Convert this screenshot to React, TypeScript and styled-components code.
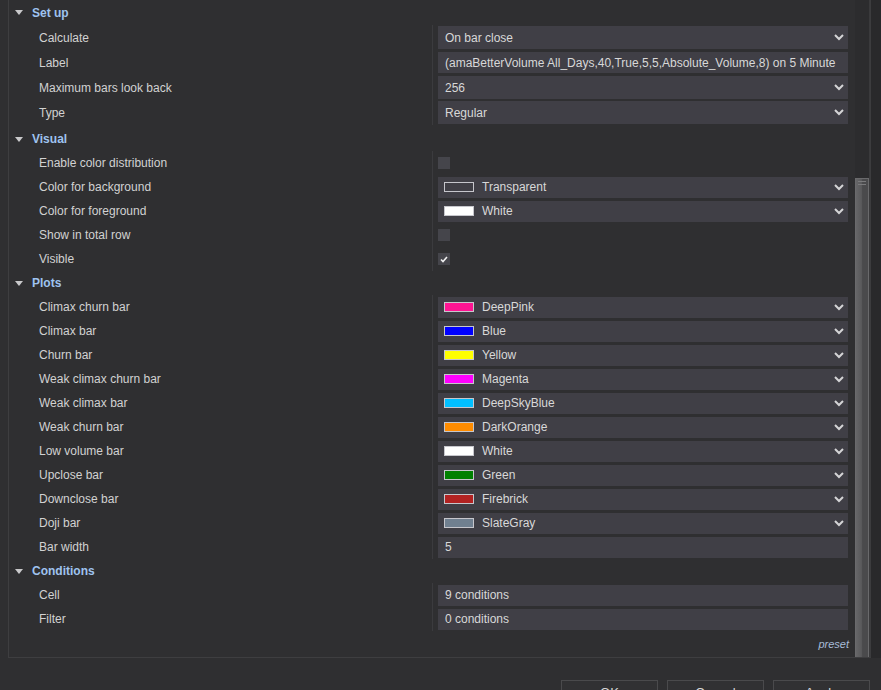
import React from "react"
import styled, { createGlobalStyle } from "styled-components"

const GlobalStyle = createGlobalStyle`
  html, body {
    margin: 0;
    padding: 0;
    background: #2f2f31;
    overflow: hidden;
  }
  body {
    width: 881px;
    height: 690px;
    font-family: "Liberation Sans", Arial, sans-serif;
    font-size: 12px;
    color: #d4d4d4;
  }
`

type Swatch = { color: string | null; name: string }

type Prop = {
  label: string
  kind: "select" | "text" | "check" | "color"
  value?: string
  checked?: boolean
  swatch?: Swatch
}

type Group = { title: string; rowH: number; extra?: number; props: Prop[] }

const groups: Group[] = [
  {
    title: "Set up",
    rowH: 25,
    extra: 2,
    props: [
      { label: "Calculate", kind: "select", value: "On bar close" },
      {
        label: "Label",
        kind: "text",
        value: "(amaBetterVolume All_Days,40,True,5,5,Absolute_Volume,8) on 5 Minute",
      },
      { label: "Maximum bars look back", kind: "select", value: "256" },
      { label: "Type", kind: "select", value: "Regular" },
    ],
  },
  {
    title: "Visual",
    rowH: 24,
    props: [
      { label: "Enable color distribution", kind: "check", checked: false },
      { label: "Color for background", kind: "color", swatch: { color: null, name: "Transparent" } },
      { label: "Color for foreground", kind: "color", swatch: { color: "#ffffff", name: "White" } },
      { label: "Show in total row", kind: "check", checked: false },
      { label: "Visible", kind: "check", checked: true },
    ],
  },
  {
    title: "Plots",
    rowH: 24,
    props: [
      { label: "Climax churn bar", kind: "color", swatch: { color: "#ff1493", name: "DeepPink" } },
      { label: "Climax bar", kind: "color", swatch: { color: "#0000ff", name: "Blue" } },
      { label: "Churn bar", kind: "color", swatch: { color: "#ffff00", name: "Yellow" } },
      { label: "Weak climax churn bar", kind: "color", swatch: { color: "#ff00ff", name: "Magenta" } },
      { label: "Weak climax bar", kind: "color", swatch: { color: "#00bfff", name: "DeepSkyBlue" } },
      { label: "Weak churn bar", kind: "color", swatch: { color: "#ff8c00", name: "DarkOrange" } },
      { label: "Low volume bar", kind: "color", swatch: { color: "#ffffff", name: "White" } },
      { label: "Upclose bar", kind: "color", swatch: { color: "#008000", name: "Green" } },
      { label: "Downclose bar", kind: "color", swatch: { color: "#b22222", name: "Firebrick" } },
      { label: "Doji bar", kind: "color", swatch: { color: "#708090", name: "SlateGray" } },
      { label: "Bar width", kind: "text", value: "5" },
    ],
  },
  {
    title: "Conditions",
    rowH: 24,
    props: [
      { label: "Cell", kind: "text", value: "9 conditions" },
      { label: "Filter", kind: "text", value: "0 conditions" },
    ],
  },
]

const Window = styled.div`
  display: flex;
  flex-direction: column;
  height: 690px;
`

const PanelRow = styled.div`
  display: flex;
  flex: none;
  height: 658px;
`

const Panel = styled.div`
  margin-left: 8px;
  width: 861px;
  display: flex;
  border-left: 1px solid #3e3e40;
  border-right: 1px solid #3c3c3e;
  border-bottom: 1px solid #3e3e40;
`

const Gutter = styled.div`
  flex: 1;
  background: #29292b;
`

const Content = styled.div`
  width: 846px;
  display: flex;
  flex-direction: column;
`

const Section = styled.div<{ $extra: number }>`
  display: flex;
  flex-direction: column;
  padding-bottom: ${(p) => p.$extra}px;
`

const Header = styled.div<{ $h: number }>`
  height: ${(p) => p.$h}px;
  display: flex;
  align-items: center;
  padding-left: 6px;
  gap: 9px;
  font-weight: bold;
  color: #9fc3ef;
`

const Caret = styled.span`
  width: 0;
  height: 0;
  border-left: 4.5px solid transparent;
  border-right: 4.5px solid transparent;
  border-top: 5px solid #c9c9cb;
`

const Row = styled.div<{ $h: number }>`
  height: ${(p) => p.$h}px;
  display: flex;
`

const Name = styled.div`
  width: 423px;
  padding-left: 30px;
  box-sizing: border-box;
  display: flex;
  align-items: center;
  color: #d2d2d2;
`

const Cell = styled.div`
  flex: 1;
  border-left: 1px solid #3b3b3e;
  padding: 0 7px 0 5px;
  display: flex;
  align-items: center;
`

const Field = styled.div<{ $h: number }>`
  flex: 1;
  height: ${(p) => p.$h}px;
  background: #403f46;
  display: flex;
  align-items: center;
  padding: 0 4px 0 7px;
  color: #d8d8d8;
  white-space: nowrap;
  overflow: hidden;
`

const FieldText = styled.span`
  flex: 1;
`

const ColorField = styled(Field)`
  padding-left: 6px;
  gap: 8px;
`

const Chip = styled.span<{ $color: string | null }>`
  width: 28px;
  height: 8px;
  border: 1px solid #c6c6cc;
  background: ${(p) => p.$color ?? "transparent"};
  flex: none;
`

const Check = styled.span`
  width: 12px;
  height: 12px;
  background: #45454b;
  display: flex;
  align-items: center;
  justify-content: center;
`

const Footer = styled.div`
  flex: 1;
  display: flex;
  justify-content: flex-end;
  align-items: center;
  padding: 0 6px 0 0;
  font-size: 11px;
  font-style: italic;
  color: #a7bcd8;
`

const Scroll = styled.div`
  width: 14px;
  display: flex;
  flex-direction: column;
  background: #2c2c2e;
  border-right: 1px solid #3a3a3c;
`

const Thumb = styled.div<{ $offset: number }>`
  margin-top: ${(p) => p.$offset}px;
  flex: 1;
  border: 1px solid #6a6a6c;
  border-bottom: none;
  background: linear-gradient(90deg, #666668 0%, #5a5a5c 45%, #4a4a4c 55%, #4a4a4c 100%);
  display: flex;
  flex-direction: column;
  align-items: center;
  padding-top: 2px;
  gap: 2px;
`

const Grip = styled.span`
  width: 8px;
  height: 1px;
  background: #7a7a7c;
`

const Buttons = styled.div`
  display: flex;
  flex: none;
  justify-content: flex-end;
  gap: 9px;
  padding: 22px 11px 0 0;
`

const Button = styled.div`
  width: 95px;
  height: 22px;
  flex: none;
  border: 1px solid #4a4a4c;
  background: #313133;
  color: #d8d8d8;
  font-size: 13px;
  display: flex;
  align-items: center;
  justify-content: center;
`

const Chevron = () => (
  <svg width="10" height="7" viewBox="0 0 10 7">
    <polyline points="1,1 5,5 9,1" fill="none" stroke="#d4d4d6" strokeWidth="2" />
  </svg>
)

const Tick = () => (
  <svg width="8" height="7" viewBox="0 0 8 7">
    <polyline points="1,3.5 3,5.5 7,1" fill="none" stroke="#f0f0f0" strokeWidth="1.6" />
  </svg>
)

const Value = ({ prop, h }: { prop: Prop; h: number }) => {
  const fh = h === 25 ? 23 : 21
  if (prop.kind === "check") {
    return <Check>{prop.checked && <Tick />}</Check>
  }
  if (prop.kind === "color" && prop.swatch) {
    return (
      <ColorField $h={fh}>
        <Chip $color={prop.swatch.color} />
        <FieldText>{prop.swatch.name}</FieldText>
        <Chevron />
      </ColorField>
    )
  }
  return (
    <Field $h={prop.kind === "text" && h === 25 ? 21 : fh}>
      <FieldText>{prop.value}</FieldText>
      {prop.kind === "select" && <Chevron />}
    </Field>
  )
}

export default function App() {
  return (
    <>
      <GlobalStyle />
      <Window>
        <PanelRow>
          <Panel>
            <Content>
              {groups.map((g) => (
                <Section key={g.title} $extra={g.extra ?? 0}>
                  <Header $h={g.rowH}>
                    <Caret />
                    {g.title}
                  </Header>
                  {g.props.map((p) => (
                    <Row key={p.label} $h={g.rowH}>
                      <Name>{p.label}</Name>
                      <Cell>
                        <Value prop={p} h={g.rowH} />
                      </Cell>
                    </Row>
                  ))}
                </Section>
              ))}
              <Footer>preset</Footer>
            </Content>
            <Scroll>
              <Thumb $offset={178}>
                <Grip />
                <Grip />
              </Thumb>
            </Scroll>
          </Panel>
          <Gutter />
        </PanelRow>
        <Buttons>
          <Button>OK</Button>
          <Button>Cancel</Button>
          <Button>Apply</Button>
        </Buttons>
      </Window>
    </>
  )
}
